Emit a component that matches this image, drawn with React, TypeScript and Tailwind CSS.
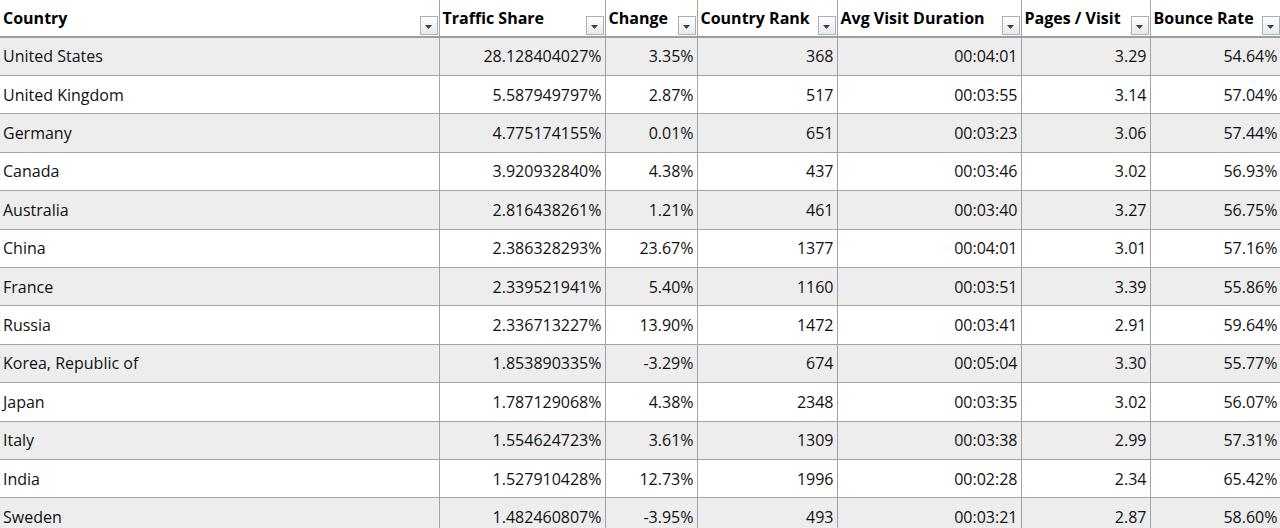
import type { ReactNode } from 'react';

type Row = {
  country: string;
  share: string;
  change: string;
  rank: string;
  duration: string;
  pages: string;
  bounce: string;
};

const rows: Row[] = [
  { country: 'United States', share: '28.128404027%', change: '3.35%', rank: '368', duration: '00:04:01', pages: '3.29', bounce: '54.64%' },
  { country: 'United Kingdom', share: '5.587949797%', change: '2.87%', rank: '517', duration: '00:03:55', pages: '3.14', bounce: '57.04%' },
  { country: 'Germany', share: '4.775174155%', change: '0.01%', rank: '651', duration: '00:03:23', pages: '3.06', bounce: '57.44%' },
  { country: 'Canada', share: '3.920932840%', change: '4.38%', rank: '437', duration: '00:03:46', pages: '3.02', bounce: '56.93%' },
  { country: 'Australia', share: '2.816438261%', change: '1.21%', rank: '461', duration: '00:03:40', pages: '3.27', bounce: '56.75%' },
  { country: 'China', share: '2.386328293%', change: '23.67%', rank: '1377', duration: '00:04:01', pages: '3.01', bounce: '57.16%' },
  { country: 'France', share: '2.339521941%', change: '5.40%', rank: '1160', duration: '00:03:51', pages: '3.39', bounce: '55.86%' },
  { country: 'Russia', share: '2.336713227%', change: '13.90%', rank: '1472', duration: '00:03:41', pages: '2.91', bounce: '59.64%' },
  { country: 'Korea, Republic of', share: '1.853890335%', change: '-3.29%', rank: '674', duration: '00:05:04', pages: '3.30', bounce: '55.77%' },
  { country: 'Japan', share: '1.787129068%', change: '4.38%', rank: '2348', duration: '00:03:35', pages: '3.02', bounce: '56.07%' },
  { country: 'Italy', share: '1.554624723%', change: '3.61%', rank: '1309', duration: '00:03:38', pages: '2.99', bounce: '57.31%' },
  { country: 'India', share: '1.527910428%', change: '12.73%', rank: '1996', duration: '00:02:28', pages: '2.34', bounce: '65.42%' },
  { country: 'Sweden', share: '1.482460807%', change: '-3.95%', rank: '493', duration: '00:03:21', pages: '2.87', bounce: '58.60%' },
];

// column widths incl. the 1px right border
const headers = [
  { label: 'Country', width: 'w-[439px]' },
  { label: 'Traffic Share', width: 'w-[166px]' },
  { label: 'Change', width: 'w-[92px]' },
  { label: 'Country Rank', width: 'w-[140px]' },
  { label: 'Avg Visit Duration', width: 'w-[184px]' },
  { label: 'Pages / Visit', width: 'w-[129px]' },
  { label: 'Bounce Rate', width: 'w-[131px]' },
];

function FilterButton() {
  return (
    <span className="absolute bottom-[1px] right-[1px] flex h-[19px] w-[18px] items-center justify-center border border-[#a9b0ba] bg-gradient-to-b from-[#ffffff] to-[#e6e9ee]">
      <svg width="7" height="4" viewBox="0 0 7 4" className="mt-[3px]">
        <path d="M0 0h7L3.5 4z" fill="#404040" />
      </svg>
    </span>
  );
}

function Cell({ children, first }: { children: ReactNode; first?: boolean }) {
  return (
    <td
      className={`h-[38.42px] overflow-hidden whitespace-nowrap border-b border-r border-[#a3a3a3] p-0 pr-[3px] ${
        first ? 'pl-[3px] text-left' : 'text-right'
      }`}
    >
      {children}
    </td>
  );
}

export default function App() {
  return (
    <div
      className="h-[528px] w-[1280px] overflow-hidden bg-white text-[16px] text-[#111]"
      style={{ fontFamily: '"Open Sans", "Noto Sans CJK KR", sans-serif' }}
    >
      <table className="w-[1281px] table-fixed border-collapse">
        <colgroup>
          {headers.map((h) => (
            <col key={h.label} className={h.width} />
          ))}
        </colgroup>
        <thead>
          <tr>
            {headers.map((h) => (
              <th
                key={h.label}
                className="relative h-[37px] border-b-2 border-r border-b-[#9c9c9c] border-r-[#a3a3a3] p-0 pl-[3px] text-left align-middle font-bold text-black"
              >
                <span className="block whitespace-nowrap pb-[1px]">{h.label}</span>
                <FilterButton />
              </th>
            ))}
          </tr>
        </thead>
        <tbody>
          {rows.map((r, i) => (
            <tr key={r.country} className={i % 2 === 0 ? 'bg-[#ededed]' : 'bg-white'}>
              <Cell first>{r.country}</Cell>
              <Cell>{r.share}</Cell>
              <Cell>{r.change}</Cell>
              <Cell>{r.rank}</Cell>
              <Cell>{r.duration}</Cell>
              <Cell>{r.pages}</Cell>
              <Cell>{r.bounce}</Cell>
            </tr>
          ))}
        </tbody>
      </table>
    </div>
  );
}
